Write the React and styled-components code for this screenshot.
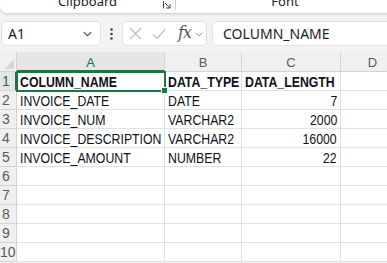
import React from "react";
import styled, { createGlobalStyle } from "styled-components";

const Global = createGlobalStyle`
  html, body { margin: 0; padding: 0; background: #f3f3f3; overflow: hidden; }
  body { width: 387px; height: 263px; font-family: "Noto Sans", "Open Sans", sans-serif; }
`;

const Page = styled.div`
  width: 387px;
  height: 263px;
  display: flex;
  flex-direction: column;
  overflow: hidden;
`;

const Ribbon = styled.div`
  height: 13px;
  background: #fff;
  border-radius: 0 0 7px 7px;
  box-shadow: 0 1px 3px rgba(0,0,0,0.18);
  display: flex;
  overflow: hidden;
  margin-right: -20px;
  flex-shrink: 0;
`;

const Group = styled.div`
  width: ${p => p.$w}px;
  position: relative;
  display: flex;
  justify-content: center;
  border-right: ${p => (p.$sep ? "1px solid #d0d0d0" : "none")};
  height: 10px;
`;

const GroupLabel = styled.span`
  font-size: 13px;
  line-height: 13px;
  margin-top: -5px;
  color: #222;
  margin-left: ${p => p.$ml || 0}px;
`;

const Launcher = styled.svg`
  position: absolute;
  right: 4px;
  top: 1px;
`;

const FormulaBar = styled.div`
  display: flex;
  align-items: center;
  height: 25px;
  margin-top: 8px;
  padding-left: 1px;
  flex-shrink: 0;
`;

const Box = styled.div`
  height: 25px;
  box-sizing: border-box;
  background: #fff;
  border: 1px solid #e2e2e2;
  border-radius: 5px;
  display: flex;
  align-items: center;
`;

const NameBox = styled(Box)`
  width: 100px;
  padding: 0 7px 0 6px;
  justify-content: space-between;
`;

const NameText = styled.span`
  font-size: 14px;
  color: #222;
`;

const Dots = styled.div`
  width: 21px;
  display: flex;
  justify-content: center;
`;

const FnBox = styled(Box)`
  width: 85px;
  padding: 0 0 0 6px;
`;

const FnIcon = styled.span`
  display: flex;
  align-items: center;
  margin-right: ${p => p.$mr || 0}px;
`;

const Fx = styled.span`
  font-family: "DejaVu Serif", "Liberation Serif", serif;
  font-style: italic;
  font-size: 16px;
  color: #555;
  letter-spacing: -0.8px;
  margin-right: 3px;
  margin-top: -2px;
`;

const FormulaInput = styled(Box)`
  flex: 1;
  margin-left: 5px;
  margin-right: -10px;
  padding-left: 10px;
  font-size: 14px;
  color: #222;
`;

const Sheet = styled.div`
  margin-top: 6px;
  display: grid;
  grid-template-columns: 17px 148px 77px 99px 64px;
  grid-template-rows: 20px repeat(10, 19px);
  background: #fff;
  position: relative;
  font-family: "Liberation Sans", Arial, sans-serif;
`;

const Corner = styled.div`
  background: #f0f0f0;
  border-right: 1px solid #d4d4d4;
  border-bottom: 1px solid #d4d4d4;
  position: relative;
`;

const ColHead = styled.div`
  background: ${p => (p.$sel ? "#e6e6e6" : "#f0f0f0")};
  border-right: 1px solid #d4d4d4;
  border-bottom: ${p => (p.$sel ? "2px solid #217346" : "1px solid #d4d4d4")};
  display: flex;
  align-items: center;
  justify-content: center;
  font-size: 13px;
  color: ${p => (p.$sel ? "#1e6e42" : "#5a5a5a")};
  padding-top: 2px;
  box-sizing: border-box;
`;

const RowHead = styled.div`
  background: ${p => (p.$sel ? "#e6e6e6" : "#f0f0f0")};
  border-right: ${p => (p.$sel ? "2px solid #217346" : "1px solid #d4d4d4")};
  border-bottom: 1px solid #d4d4d4;
  display: flex;
  align-items: center;
  font-size: 14px;
  color: ${p => (p.$sel ? "#1e6e42" : "#5a5a5a")};
  padding-left: ${p => (p.$wide ? 0 : 2)}px;
  box-sizing: border-box;
  overflow: hidden;
`;

const Cell = styled.div`
  border-right: 1px solid #e1e1e1;
  border-bottom: 1px solid #e1e1e1;
  box-sizing: border-box;
  display: flex;
  align-items: center;
  justify-content: ${p => (p.$num ? "flex-end" : "flex-start")};
  padding: 1px 3px 0 3px;
  white-space: nowrap;
`;

const CellText = styled.span`
  display: inline-block;
  font-size: 15px;
  font-weight: ${p => (p.$bold ? 700 : 400)};
  color: #10121a;
  transform: scaleX(0.82);
  transform-origin: ${p => (p.$num ? "right" : "left")} center;
`;

const Selection = styled.div`
  position: absolute;
  left: 16px;
  top: 19px;
  width: 150px;
  height: 21px;
  border: 2px solid #217346;
  box-sizing: border-box;
  pointer-events: none;
`;

const Handle = styled.div`
  position: absolute;
  right: -4px;
  bottom: -4px;
  width: 5px;
  height: 5px;
  background: #217346;
  border: 1px solid #fff;
`;

const Chevron = ({ color = "#555", size = 11 }) => (
  <svg width={size} height={size} viewBox="0 0 12 12">
    <path d="M2 4.5 L6 8.5 L10 4.5" fill="none" stroke={color} strokeWidth="1.2" />
  </svg>
);

const data = [
  ["COLUMN_NAME", "DATA_TYPE", "DATA_LENGTH"],
  ["INVOICE_DATE", "DATE", "7"],
  ["INVOICE_NUM", "VARCHAR2", "2000"],
  ["INVOICE_DESCRIPTION", "VARCHAR2", "16000"],
  ["INVOICE_AMOUNT", "NUMBER", "22"],
];

export default function App() {
  const rows = [];
  for (let r = 0; r < 10; r++) {
    const d = data[r];
    const bold = r === 0;
    rows.push(
      <React.Fragment key={r}>
        <RowHead $sel={r === 0} $wide={r === 9}>{r + 1}</RowHead>
        <Cell>{d && <CellText $bold={bold}>{d[0]}</CellText>}</Cell>
        <Cell>{d && <CellText $bold={bold}>{d[1]}</CellText>}</Cell>
        <Cell $num={r > 0}>{d && <CellText $bold={bold} $num={r > 0}>{d[2]}</CellText>}</Cell>
        <Cell />
      </React.Fragment>
    );
  }
  return (
    <Page>
      <Global />
      <Ribbon>
        <Group $w={175} $sep>
          <GroupLabel>Clipboard</GroupLabel>
          <Launcher width="8" height="8" viewBox="0 0 8 8">
            <path d="M0.5 0 V7.5 M2 2 L6.5 6.5 M3 7 H7 V3" fill="none" stroke="#444" strokeWidth="1" />
          </Launcher>
        </Group>
        <Group $w={220}>
          <GroupLabel $ml={-2}>Font</GroupLabel>
        </Group>
      </Ribbon>
      <FormulaBar>
        <NameBox>
          <NameText>A1</NameText>
          <Chevron color="#444" />
        </NameBox>
        <Dots>
          <svg width="3" height="12" viewBox="0 0 3 12">
            <circle cx="1.5" cy="1.5" r="1.3" fill="#444" />
            <circle cx="1.5" cy="6" r="1.3" fill="#444" />
            <circle cx="1.5" cy="10.5" r="1.3" fill="#444" />
          </svg>
        </Dots>
        <FnBox>
          <FnIcon $mr={10}>
            <svg width="13" height="13" viewBox="0 0 13 13">
              <path d="M1 1 L12 12 M12 1 L1 12" stroke="#bdbdbd" strokeWidth="1.2" fill="none" />
            </svg>
          </FnIcon>
          <FnIcon $mr={12}>
            <svg width="14" height="12" viewBox="0 0 14 12">
              <path d="M1 6.5 L5 10.5 L13 1.5" stroke="#bdbdbd" strokeWidth="1.2" fill="none" />
            </svg>
          </FnIcon>
          <Fx>fx</Fx>
          <FnIcon>
            <Chevron color="#999" size={10} />
          </FnIcon>
        </FnBox>
        <FormulaInput>COLUMN_NAME</FormulaInput>
      </FormulaBar>
      <Sheet>
        <Corner>
          <svg width="10" height="10" viewBox="0 0 10 10" style={{ position: "absolute", right: 2, bottom: 2 }}>
            <path d="M10 0 L10 10 L0 10 Z" fill="#d8d8d8" />
          </svg>
        </Corner>
        <ColHead $sel>A</ColHead>
        <ColHead>B</ColHead>
        <ColHead>C</ColHead>
        <ColHead>D</ColHead>
        {rows}
        <Selection>
          <Handle />
        </Selection>
      </Sheet>
    </Page>
  );
}
